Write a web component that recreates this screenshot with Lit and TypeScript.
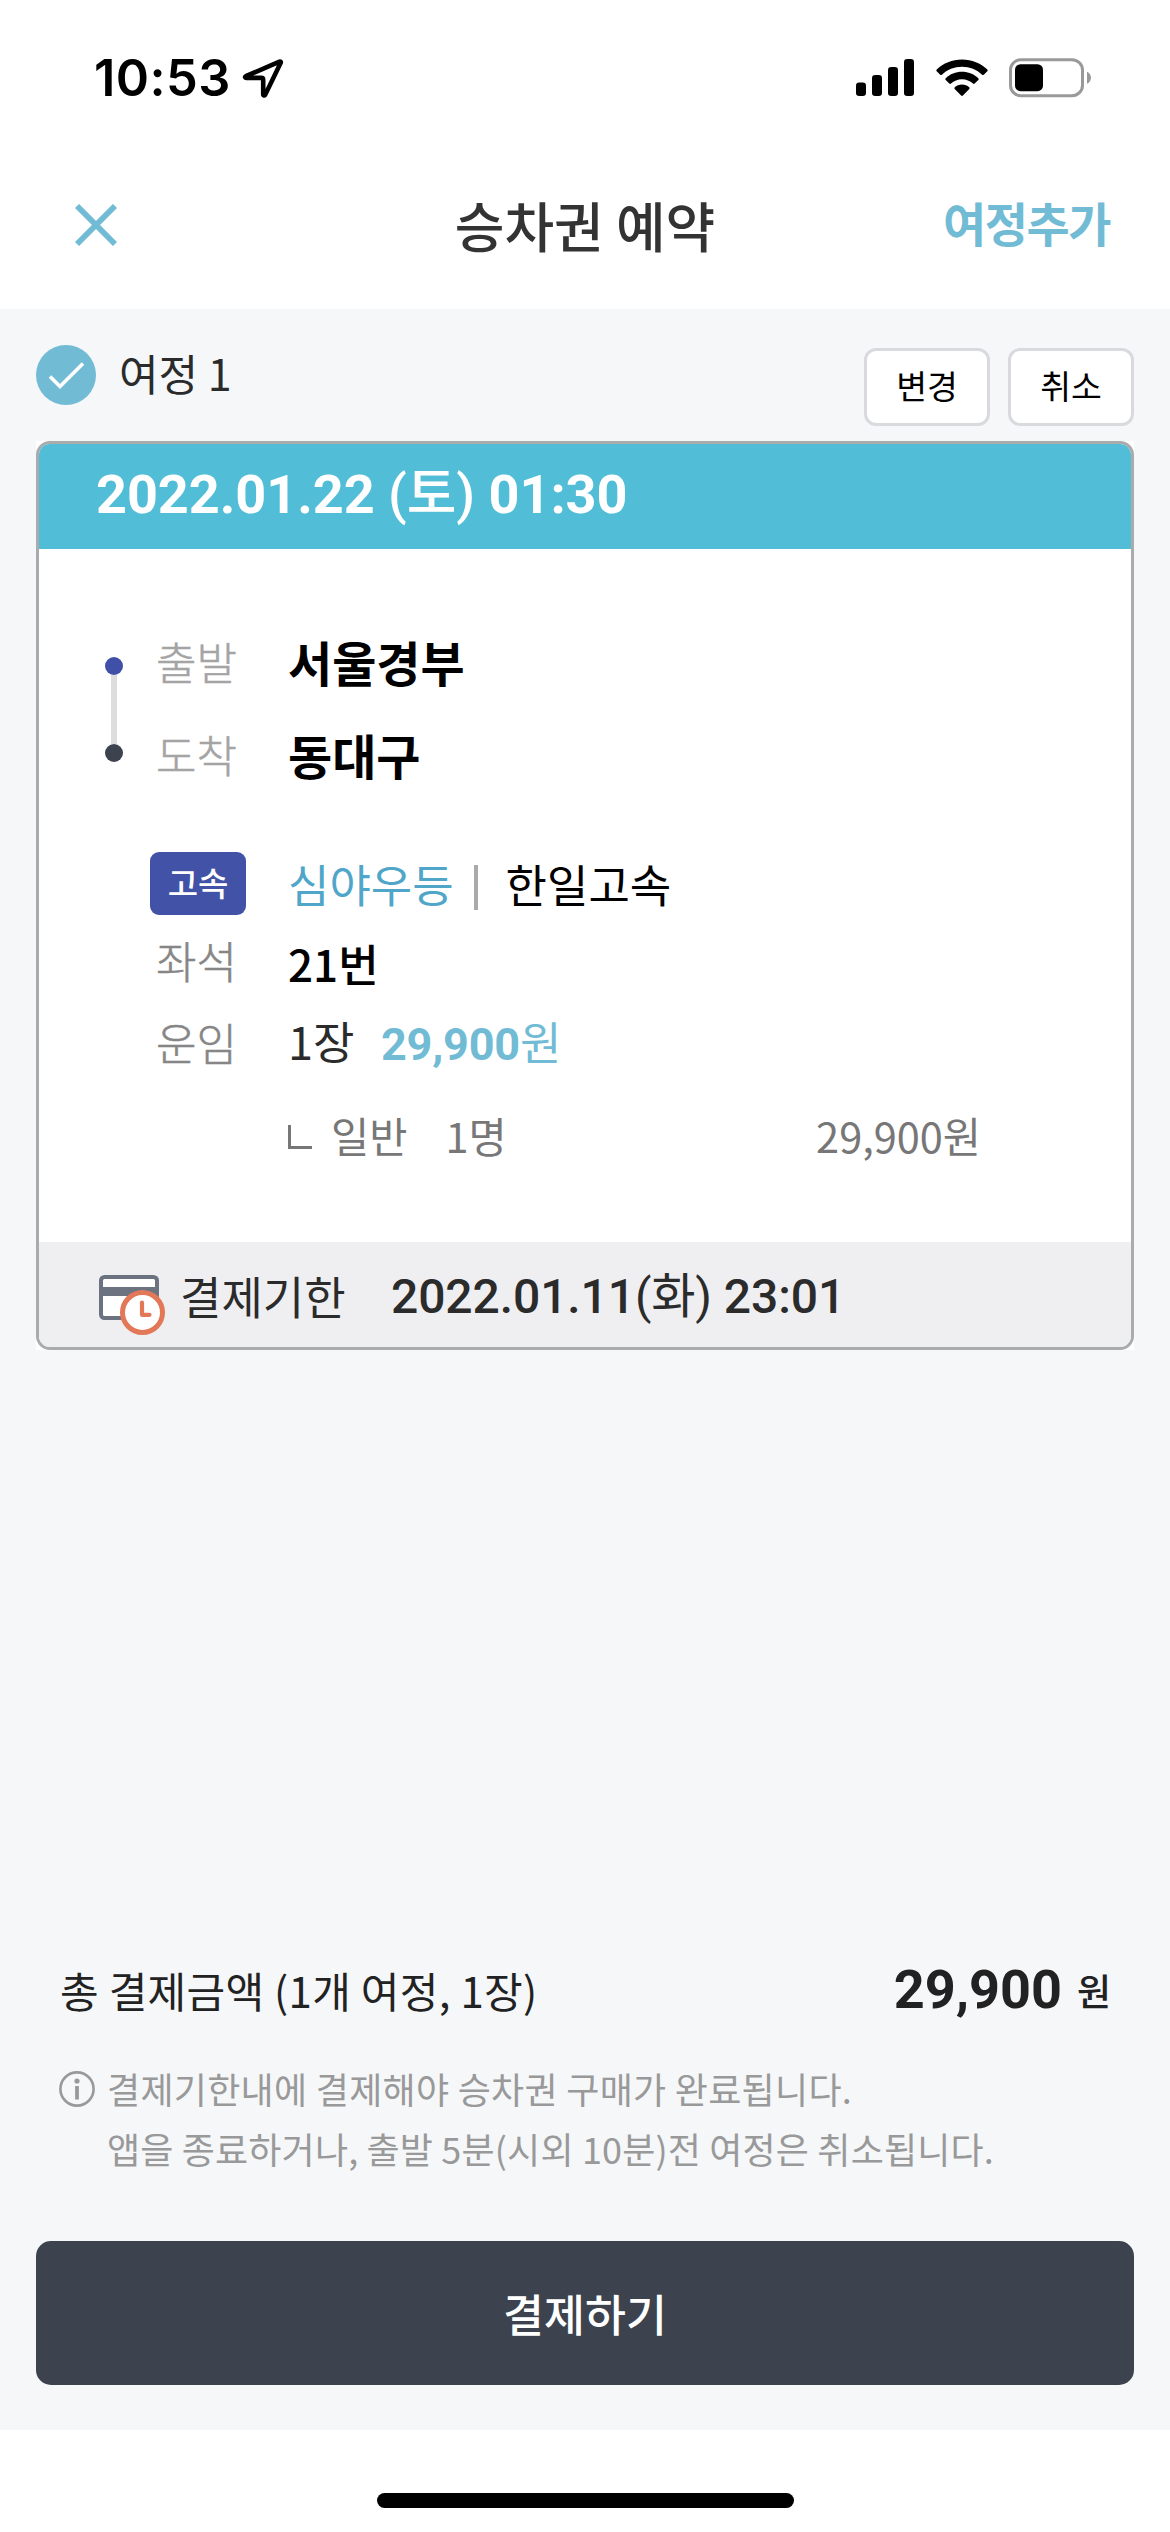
import { LitElement, html, css, svg } from "lit";
import { customElement, property } from "lit/decorators.js";

const korean = css`"Noto Sans CJK KR", sans-serif`;

@customElement("status-bar")
class StatusBar extends LitElement {
  @property() time = "";

  static styles = css`
    :host {
      display: flex;
      align-items: center;
      height: 156px;
      padding: 0 78px 0 94px;
      box-sizing: border-box;
      color: #000;
    }
    .time {
      font: 600 50.500px/60px Inter, sans-serif;
      letter-spacing: 0.4px;
      width: 148px;
      white-space: nowrap;
    }
    .arrow { display: block; width: 42px; height: 40px; }
    .signal { display: block; margin-left: auto; width: 58px; height: 38px; }
    .wifi { display: block; margin-left: 22px; width: 52px; height: 38px; }
    .battery { display: block; margin-left: 21px; width: 83px; height: 40px; }
  `;

  render() {
    return html`
      <span class="time">${this.time}</span>
      <svg class="arrow" viewBox="0 0 42 40">
        <path d="M37.5 3.6 3.8 18.2c-1.2.6-.9 1.7.4 1.7H19.300c1.200 0 1.900.7 1.900 1.900V36.200c0 1.400 1.500 1.700 2.100.4L38.700 4.800c.4-.9-.3-1.500-1.200-1.200Z"
          fill="none" stroke="#000" stroke-width="4.600" stroke-linejoin="round" />
      </svg>
      <svg class="signal" viewBox="0 0 58 38">
        ${[
          [0, 23.5],
          [16, 16],
          [32, 8],
          [48, 0],
        ].map(
          ([x, y]) => svg`<rect x=${x} y=${y} width="10" height=${37 - y} rx="3.2"></rect>`
        )}
      </svg>
      <svg class="wifi" viewBox="0 0 52 38">
        <path d="M26 .4C35.800.4 44.700 4.200 51.300 10.400c.5.500.5 1.300 0 1.800l-3.500 3.500c-.5.500-1.200.5-1.700 0C40.900 10.800 33.800 7.800 26 7.800S11.100 10.800 5.900 15.700c-.5.500-1.200.5-1.700 0L.7 12.200c-.5-.5-.5-1.300 0-1.800C7.300 4.200 16.200.4 26 .4Z" />
        <path d="M26 12.800c6.300 0 12 2.400 16.300 6.400.5.500.5 1.300 0 1.800l-3.600 3.500c-.5.500-1.200.5-1.700 0C34.100 21.900 30.200 20.200 26 20.200s-8.100 1.700-11 4.300c-.5.500-1.200.5-1.700 0L9.700 21c-.5-.5-.5-1.300 0-1.800 4.300-4 10-6.400 16.300-6.400Z" />
        <path d="M26 25.500c2.800 0 5.300 1 7.200 2.700.5.500.5 1.200.1 1.700l-6.400 6.600c-.5.500-1.300.5-1.800 0l-6.400-6.600c-.4-.5-.4-1.200.1-1.700 1.900-1.700 4.400-2.700 7.200-2.700Z" />
      </svg>
      <svg class="battery" viewBox="0 0 83 40">
        <rect x="1.500" y="1.700" width="72" height="36" rx="10.500" fill="none" stroke="#999" stroke-width="3" />
        <rect x="6" y="6.200" width="28" height="27" rx="5.500" />
        <path d="M78 13.700c5.300 2 5.300 10 0 12Z" fill="#999" />
      </svg>
    `;
  }
}

@customElement("nav-bar")
class NavBar extends LitElement {
  @property() heading = "";
  @property() action = "";

  static styles = css`
    :host {
      display: grid;
      grid-template-columns: 1fr auto 1fr;
      align-items: center;
      height: 153px;
      padding: 0 60px 15px 75px;
      box-sizing: border-box;
      font-family: ${korean};
    }
    .close { display: block; width: 42px; height: 42px; }
    .heading {
      margin: 0 0 0 -15px;
      font-size: 54px;
      line-height: 80px;
      font-weight: 500;
      color: #333;
    }
    .action {
      justify-self: end;
      margin-bottom: 6px;
      font-size: 47px;
      line-height: 70px;
      font-weight: 700;
      letter-spacing: -1.5px;
      color: #71bbd5;
    }
  `;

  render() {
    return html`
      <svg class="close" viewBox="0 0 42 42">
        <path d="M2 2l38 38M40 2 2 40" stroke="#71bbd5" stroke-width="5.800" />
      </svg>
      <h1 class="heading">${this.heading}</h1>
      <span class="action">${this.action}</span>
    `;
  }
}

@customElement("trip-header")
class TripHeader extends LitElement {
  @property() label = "";

  static styles = css`
    :host {
      display: flex;
      align-items: flex-start;
      height: 81px;
      font-family: ${korean};
    }
    .check { display: block; width: 60px; height: 60px; }
    .label {
      margin: -3px auto 0 23px;
      font-size: 43px;
      line-height: 60px;
      color: #2b2b2b;
    }
    .btn {
      margin: 3px 0 0 18px;
      width: 126px;
      height: 78px;
      padding: 0 0 4px;
      box-sizing: border-box;
      border: 3px solid #d8dadd;
      border-radius: 12px;
      background: #fff;
      color: #000;
      font: 400 33.500px/60px ${korean};
    }
  `;

  render() {
    return html`
      <svg class="check" viewBox="0 0 60 60">
        <circle cx="30" cy="30" r="30" fill="#71bbd5" />
        <path d="M14 31.500 24 41.500 47 18.500" fill="none" stroke="#fff" stroke-width="3.600" />
      </svg>
      <span class="label">${this.label}</span>
      <button class="btn">변경</button>
      <button class="btn">취소</button>
    `;
  }
}

@customElement("trip-card")
class TripCard extends LitElement {
  static styles = css`
    :host {
      display: block;
      background: #fff;
      font-family: ${korean};
      white-space: nowrap;
    }
    .card {
      height: 909px;
      box-sizing: border-box;
      border: 3px solid #a9abac;
      border-radius: 14px;
      overflow: hidden;
      display: flex;
      flex-direction: column;
    }
    .when {
      height: 105px;
      box-sizing: border-box;
      padding: 0 0 4px 57px;
      background: #52bdd6;
      color: #fff;
      font: 700 54px/101px Roboto, ${korean};
      letter-spacing: -0.05px;
    }
    .weekday { font-weight: 500; }
    .body { flex: 1; padding: 65px 0 0 66px; }
    .route { display: flex; }
    .rail {
      display: flex;
      flex-direction: column;
      align-items: center;
      width: 18px;
      height: 105px;
      margin-top: 43px;
    }
    .dot { width: 18px; height: 18px; border-radius: 50%; background: #4050a8; }
    .dot-end { background: #3d434e; }
    .line { flex: 1; width: 6px; background: #ddd; }
    .stops { margin-left: 33px; }
    .stop { display: flex; align-items: center; height: 93px; }
    .key {
      width: 132px;
      font-size: 44px;
      line-height: 60px;
      font-weight: 300;
      color: #a4a4a4;
      -webkit-text-stroke: 0.500px #a4a4a4;
    }
    .place { font-size: 48px; line-height: 60px; font-weight: 700; color: #000; }
    .details { padding-left: 51px; }
    .row { display: flex; align-items: center; height: 60px; font-size: 44px; line-height: 60px; }
    .grade-row { height: 63px; margin: 52px 0 15px -6px; font-size: 45px; }
    .badge {
      width: 96px;
      height: 63px;
      margin-right: 42px;
      padding-bottom: 3px;
      box-sizing: border-box;
      border-radius: 9px;
      background: #4252a7;
      color: #fff;
      text-align: center;
      font-size: 33px;
      font-weight: 500;
    }
    .grade { color: #4fa6c9; }
    .bar { width: 4px; height: 45px; margin: 8px 28px 0 20px; background: #aaa; }
    .company { color: #000; }
    .name {
      width: 132px;
      font-size: 44px;
      font-weight: 300;
      color: #868686;
      -webkit-text-stroke: 0.500px #868686;
    }
    .seat { margin-top: 6px; color: #000; font-weight: 500; }
    .fare-row { margin-top: 22px; }
    .count { width: 93px; margin-bottom: 3px; color: #2b2b2b; font-size: 45px; }
    .price { margin-top: 5px; font: 700 45px/60px Roboto, ${korean}; letter-spacing: -0.2px; color: #71bbd5; }
    .won { font-weight: 400; }
    .sub-row { margin: 33px 0 0 132px; font-size: 41.500px; color: #777; }
    .elbow {
      width: 24px;
      height: 24px;
      box-sizing: border-box;
      border: solid #777;
      border-width: 0 0 3px 3px;
      margin: 3px 19px 0 0;
    }
    .people { margin-left: 38px; }
    .amount { margin: 0 150px 0 auto; }
    .due {
      display: flex;
      align-items: center;
      height: 105px;
      padding-left: 60px;
      background: #efeff2;
      color: #2b2b2b;
    }
    .due-icon { display: block; width: 67px; height: 60px; margin-top: 21px; }
    .due-key { margin: 3px 0 0 14px; width: 211px; font-size: 45px; line-height: 60px; }
    .due-date { margin-top: 4px; font: 500 48px/60px Roboto, ${korean}; letter-spacing: -0.1px; }
    .due-weekday { font-weight: 400; }
  `;

  render() {
    return html`
      <div class="card">
        <div class="when">2022.01.22 <span class="weekday">(토)</span> 01:30</div>
        <div class="body">
          <div class="route">
            <div class="rail">
              <i class="dot"></i><i class="line"></i><i class="dot dot-end"></i>
            </div>
            <div class="stops">
              <div class="stop"><span class="key">출발</span><span class="place">서울경부</span></div>
              <div class="stop"><span class="key">도착</span><span class="place">동대구</span></div>
            </div>
          </div>
          <div class="details">
            <div class="row grade-row">
              <span class="badge">고속</span>
              <span class="grade">심야우등</span>
              <i class="bar"></i>
              <span class="company">한일고속</span>
            </div>
            <div class="row">
              <span class="name">좌석</span><span class="seat">21번</span>
            </div>
            <div class="row fare-row">
              <span class="name">운임</span><span class="count">1장</span>
              <span class="price">29,900<span class="won">원</span></span>
            </div>
            <div class="row sub-row">
              <i class="elbow"></i><span>일반</span><span class="people">1명</span>
              <span class="amount">29,900원</span>
            </div>
          </div>
        </div>
        <div class="due">
          <svg class="due-icon" viewBox="0 0 67 60">
            <rect x="2" y="2" width="56" height="41" rx="3.500" fill="#fff" stroke="#6b7280" stroke-width="4" />
            <rect x="2" y="12" width="56" height="9" fill="#6b7280" />
            <circle cx="43.500" cy="37.500" r="20" fill="#fff" stroke="#e27857" stroke-width="5" />
            <path d="M43 27.500V39.800H50.500" fill="none" stroke="#e27857" stroke-width="4.200" stroke-linecap="round" stroke-linejoin="round" />
          </svg>
          <span class="due-key">결제기한</span>
          <span class="due-date">2022.01.11<span class="due-weekday">(화)</span> 23:01</span>
        </div>
      </div>
    `;
  }
}

@customElement("pay-panel")
class PayPanel extends LitElement {
  static styles = css`
    :host { display: block; font-family: ${korean}; white-space: nowrap; }
    .total {
      display: flex;
      align-items: center;
      height: 60px;
      padding: 0 23px 0 24px;
      font-size: 42px;
      line-height: 60px;
      color: #222;
    }
    .summary { letter-spacing: 0.3px; }
    .sum { margin-left: auto; font: 700 54px/60px Roboto, sans-serif; }
    .unit { margin-left: 15px; font-size: 37px; font-weight: 500; }
    .notice {
      display: flex;
      margin: 38px 0 63px;
      padding-left: 23px;
      font-size: 36px;
      line-height: 60px;
      color: #999;
    }
    .deadline { letter-spacing: 0.280px; }
    .cancel { letter-spacing: 0.160px; }
    .info { display: block; width: 36px; height: 36px; margin: 13px 12px 0 0; }
    .pay {
      display: block;
      width: 100%;
      height: 144px;
      padding: 0 0 1px;
      border: 0;
      border-radius: 15px;
      background: #3d434e;
      color: #fff;
      font: 500 44.500px/60px ${korean};
    }
  `;

  render() {
    return html`
      <div class="total">
        <span class="summary">총 결제금액 (1개 여정, 1장)</span>
        <span class="sum">29,900</span><span class="unit">원</span>
      </div>
      <div class="notice">
        <svg class="info" viewBox="0 0 36 36">
          <circle cx="18" cy="18" r="16.600" fill="none" stroke="#999" stroke-width="2.600" />
          <circle cx="18" cy="10" r="2.600" fill="#999" />
          <rect x="16.100" y="15" width="3.800" height="13.500" fill="#999" />
        </svg>
        <div>
          <div class="deadline">결제기한내에 결제해야 승차권 구매가 완료됩니다.</div>
          <div class="cancel">앱을 종료하거나, 출발 5분(시외 10분)전 여정은 취소됩니다.</div>
        </div>
      </div>
      <button class="pay">결제하기</button>
    `;
  }
}

@customElement("app-root")
class AppRoot extends LitElement {
  static styles = css`
    :host {
      display: flex;
      flex-direction: column;
      width: 1170px;
      height: 2532px;
      overflow: hidden;
      background: #fff;
    }
    .main {
      display: flex;
      flex-direction: column;
      height: 2121px;
      padding: 36px 36px 45px;
      box-sizing: border-box;
      background: #f5f7f9;
    }
    .card { margin-top: 15px; }
    .panel { margin-top: auto; }
    .home { width: 417px; height: 15px; margin: 63px auto 0; border-radius: 8px; background: #000; }
  `;

  render() {
    return html`
      <status-bar time="10:53"></status-bar>
      <nav-bar heading="승차권 예약" action="여정추가"></nav-bar>
      <main class="main">
        <trip-header label="여정 1"></trip-header>
        <trip-card class="card"></trip-card>
        <pay-panel class="panel"></pay-panel>
      </main>
      <div class="home"></div>
    `;
  }
}
